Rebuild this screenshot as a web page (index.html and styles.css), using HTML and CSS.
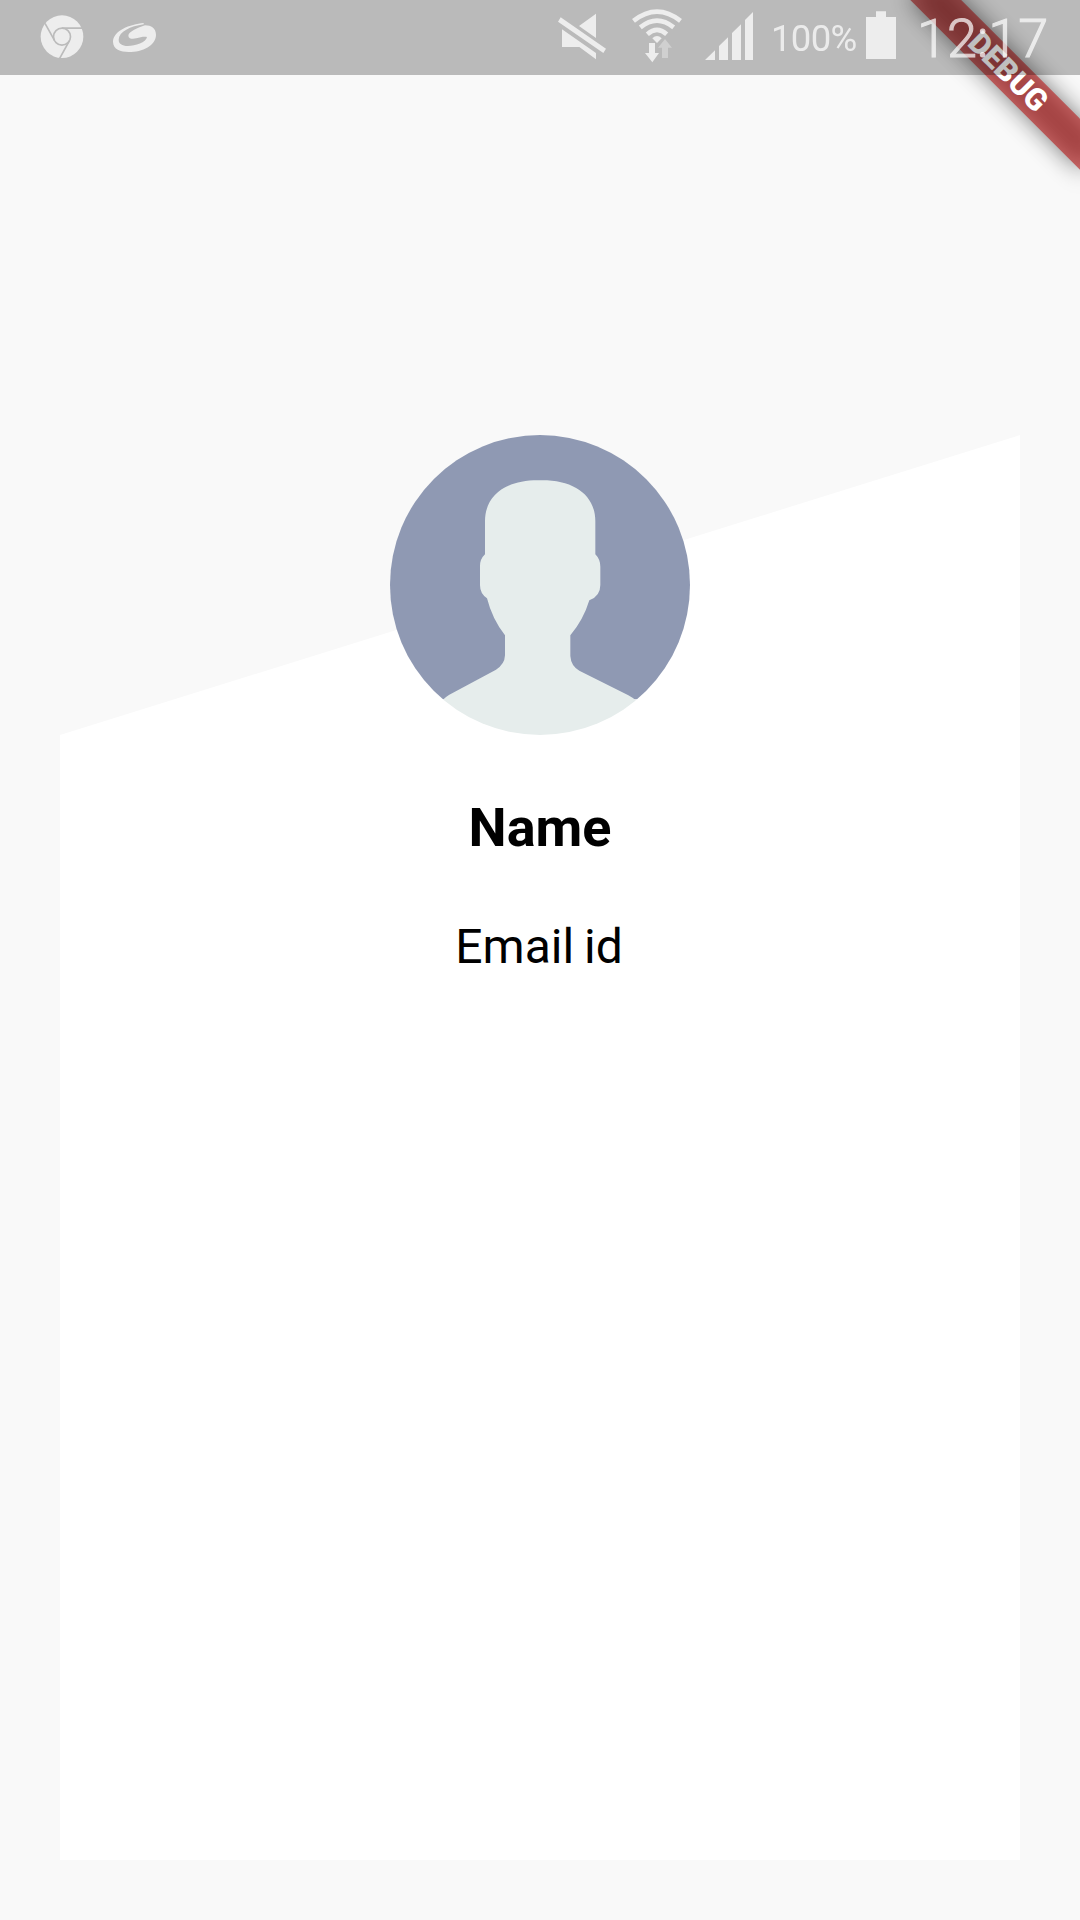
FILE: index.html
```
<!DOCTYPE html>
<html lang="en">
<head>
<meta charset="utf-8">
<title>Profile</title>
<link rel="stylesheet" href="styles.css">
</head>
<body>
<div class="screen">
  <header class="status-bar">
    <div class="notifications">
      <svg class="icon chrome" viewBox="60 0 132 225">
        <circle cx="126" cy="110" r="64"/>
        <g class="cut">
          <circle cx="126" cy="110" r="25.5"/>
          <path d="M126 84.500H186M103.500 121 75 70M148.500 122 119 175"/>
        </g>
      </svg>
      <svg class="icon swirl" viewBox="276 0 135 225">
        <path d="M371 69C330 73 279 92 279 126C280 148 301 156 326 156C368 156 408 136 408 104C407 84 394 76 375 76C354 83 326 95 325 107C326 117 338 118 349 115C361 111 373 109 381 111C378 127 347 138 323 138C306 137 296 131 296 119C297 95 331 79 371 73Z"/>
      </svg>
    </div>
    <div class="system">
      <svg class="icon mute" viewBox="51 0 150 225">
        <path d="M62 52 198 146 190 159 54 65ZM168 41V114L117 78ZM66 88 168 159V178L118 141H66Z"/>
      </svg>
      <svg class="icon wifi" viewBox="273 0 156 225">
        <path class="arc" d="M280.500 62.500Q351 7 421.500 62.500M301 82Q351 42 401 82M322 102.500Q351 77 380 102.500"/>
        <path d="M337 115Q351 101 365 115L351 129Z"/>
        <path d="M327 129H345V159H357L337 187 315 159H327Z"/>
        <path class="dim" d="M375 117 396 143H384V174H366V143H354Z"/>
      </svg>
      <svg class="icon signal" viewBox="495 0 147 225">
        <path d="M495 180 525 151V180ZM537 138 564 112V180H537ZM576 99 603 73V180H576ZM615 60 639 36V180H615Z"/>
      </svg>
      <span class="percent">100%</span>
      <svg class="icon battery" viewBox="315 0 96 225">
        <path d="M348 34H378V51H408V177H318V51H348Z"/>
      </svg>
      <span class="time">12:17</span>
    </div>
  </header>
  <main class="content">
    <section class="profile">
      <div class="card"></div>
      <svg class="avatar" viewBox="60 45 900 900">
        <defs><clipPath id="round"><circle cx="510" cy="495" r="450"/></clipPath></defs>
        <g clip-path="url(#round)">
          <path class="backdrop" d="M60 45H960V838H60Z"/>
          <path class="person" d="M510 181C610 179 676 224 676 304V403Q691 418 691 440V495Q691 529 658 541Q640 600 601 646V708Q603 738 628 752L775 826Q790 834 800 843V950H218V840Q226 831 238 824L378 749Q404 733 405 706V646Q367 598 351 535Q330 521 330 496V438Q330 417 345 403V304C345 224 410 179 510 181Z"/>
        </g>
      </svg>
      <h1 class="name">Name</h1>
      <p class="email">Email id</p>
    </section>
  </main>
  <div class="ribbon"><span class="ribbon-label">DEBUG</span></div>
</div>
</body>
</html>
```
FILE: styles.css
```
body {
  margin: 0;
  font-family: Roboto, sans-serif;
}

.screen {
  position: relative;
  display: flex;
  flex-direction: column;
  width: 1080px;
  height: 1920px;
  overflow: hidden;
  background: #f9f9f9;
}

.status-bar {
  position: relative;
  z-index: 2;
  display: flex;
  justify-content: space-between;
  height: 75px;
  box-sizing: border-box;
  padding: 0 33px 0 40px;
  background: rgba(0, 0, 0, 0.25);
  color: #fff;
}

.notifications,
.system {
  display: flex;
}

.notifications { gap: 28px; }

.icon {
  height: 75px;
  fill: #ededed;
}

.chrome { width: 44px; }
.swirl { width: 45px; }
.mute { width: 50px; margin-right: 24px; }
.wifi { width: 52px; margin-right: 22px; }
.signal { width: 49px; margin-right: 17px; }
.battery { width: 32px; }

.cut {
  fill: none;
  stroke: #bbb;
  stroke-width: 5;
}

.arc {
  fill: none;
  stroke: #ededed;
  stroke-width: 14;
}

.dim { fill: #d0d0d0; }

.percent {
  width: 94px;
  font-size: 36.5px;
  letter-spacing: -0.7px;
  line-height: 77px;
  opacity: 0.72;
}

.time {
  width: 130px;
  margin-left: 20px;
  font-size: 54px;
  font-weight: 300;
  line-height: 78px;
  opacity: 0.72;
  -webkit-text-stroke: 1.1px #fff;
}

.content {
  flex: 1;
  display: grid;
  padding: 360px 60px 60px;
}

.profile {
  display: grid;
  grid-template-rows: 300px 125px 115px 1fr;
  justify-items: center;
  color: #000;
}

.card {
  grid-area: 1 / 1 / -1 / 2;
  place-self: stretch;
  background: #fff;
  clip-path: polygon(0 300px, 100% 0, 100% 100%, 0 100%);
}

.avatar {
  grid-area: 1 / 1;
  z-index: 1;
  width: 300px;
  height: 300px;
}

.backdrop { fill: #8f99b3; }
.person { fill: #e6edec; }

.name,
.email {
  z-index: 1;
  margin: 0;
}

.name {
  grid-area: 2 / 1;
  align-self: end;
  font-size: 54px;
  font-weight: 700;
  line-height: 64px;
}

.email {
  grid-area: 3 / 1;
  align-self: end;
  padding-right: 2px;
  font-size: 48px;
  line-height: 56px;
  word-spacing: -2px;
}

.ribbon {
  position: absolute;
  top: 84px;
  left: 960px;
  z-index: 1;
  display: flex;
  align-items: center;
  justify-content: center;
  width: 240px;
  height: 36px;
  transform: rotate(45deg);
  transform-origin: 120px -84px;
}

.ribbon::before,
.ribbon::after {
  content: "";
  position: absolute;
  inset: 0;
}

.ribbon::before {
  background: rgba(0, 0, 0, 0.5);
  filter: blur(11.9px);
}

.ribbon::after { background: rgba(183, 28, 28, 0.627); }

.ribbon-label {
  position: relative;
  z-index: 1;
  color: #fff;
  font-size: 30.6px;
  font-weight: 900;
  line-height: 36px;
}
```
